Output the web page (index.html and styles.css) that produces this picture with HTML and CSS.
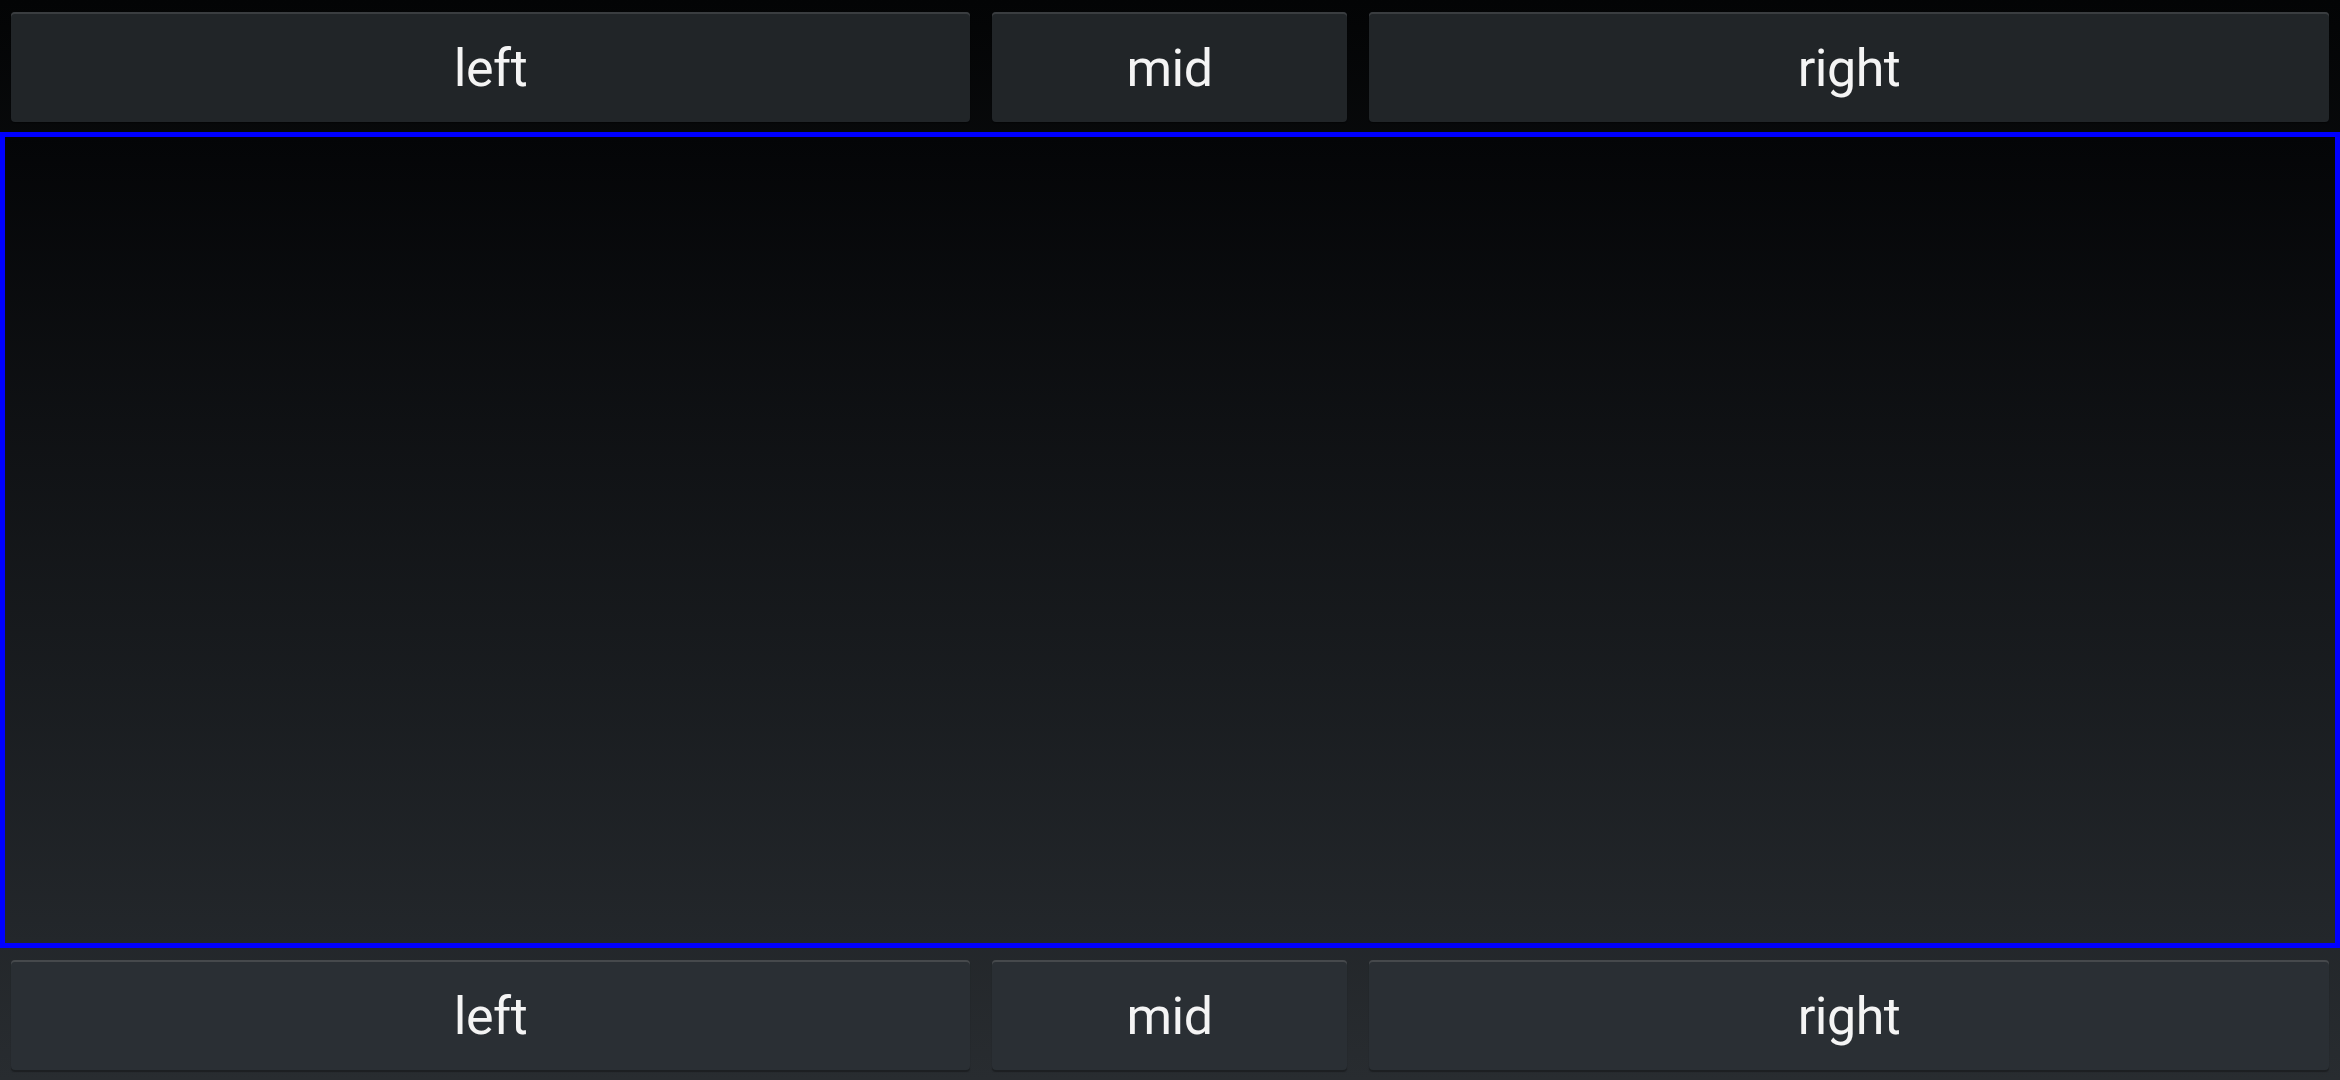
FILE: index.html
```html
<!DOCTYPE html>
<html>
<head>
<meta charset="utf-8">
<link rel="stylesheet" href="styles.css">
</head>
<body>
<div class="screen">
  <div class="bar bar-top">
    <div class="cell"><button class="btn">left</button></div>
    <div class="cell"><button class="btn">mid</button></div>
    <div class="cell"><button class="btn">right</button></div>
  </div>
  <div class="stage"></div>
  <div class="bar bar-bottom">
    <div class="cell"><button class="btn">left</button></div>
    <div class="cell"><button class="btn">mid</button></div>
    <div class="cell"><button class="btn">right</button></div>
  </div>
</div>
</body>
</html>
```
FILE: styles.css
```css
html, body {
  margin: 0;
  padding: 0;
}
body {
  width: 2340px;
  height: 1080px;
  overflow: hidden;
  font-family: Roboto, "Noto Sans", sans-serif;
}
.screen {
  width: 2340px;
  height: 1080px;
  display: flex;
  flex-direction: column;
  background: linear-gradient(to bottom, #030405 0%, #282c30 100%);
}
.bar {
  height: 132px;
  display: grid;
  grid-template-columns: 981px 377px 1fr;
  flex: none;
}
.cell {
  padding: 12px 11px 10px 11px;
  display: flex;
}
.btn {
  flex: 1;
  margin: 0;
  border: none;
  border-radius: 4px;
  font-family: Roboto, "Noto Sans", sans-serif;
  font-size: 52px;
  letter-spacing: -0.5px;
  color: #f4f4f4;
  padding: 2px 0 0 0;
  cursor: pointer;
}
.bar-top .btn {
  background: #212528;
  box-shadow: inset 0 2px 0 #3a3d40, 0 1px 1px rgba(0,0,0,0.4);
}
.bar-bottom .btn {
  background: #2a2f34;
  box-shadow: inset 0 2px 0 #46494c, 0 2px 1px #1c1f22;
}
.stage {
  flex: 1;
  border: 5px solid #0000ff;
  background: linear-gradient(to bottom, #040507 0%, #23272b 100%);
}
```
